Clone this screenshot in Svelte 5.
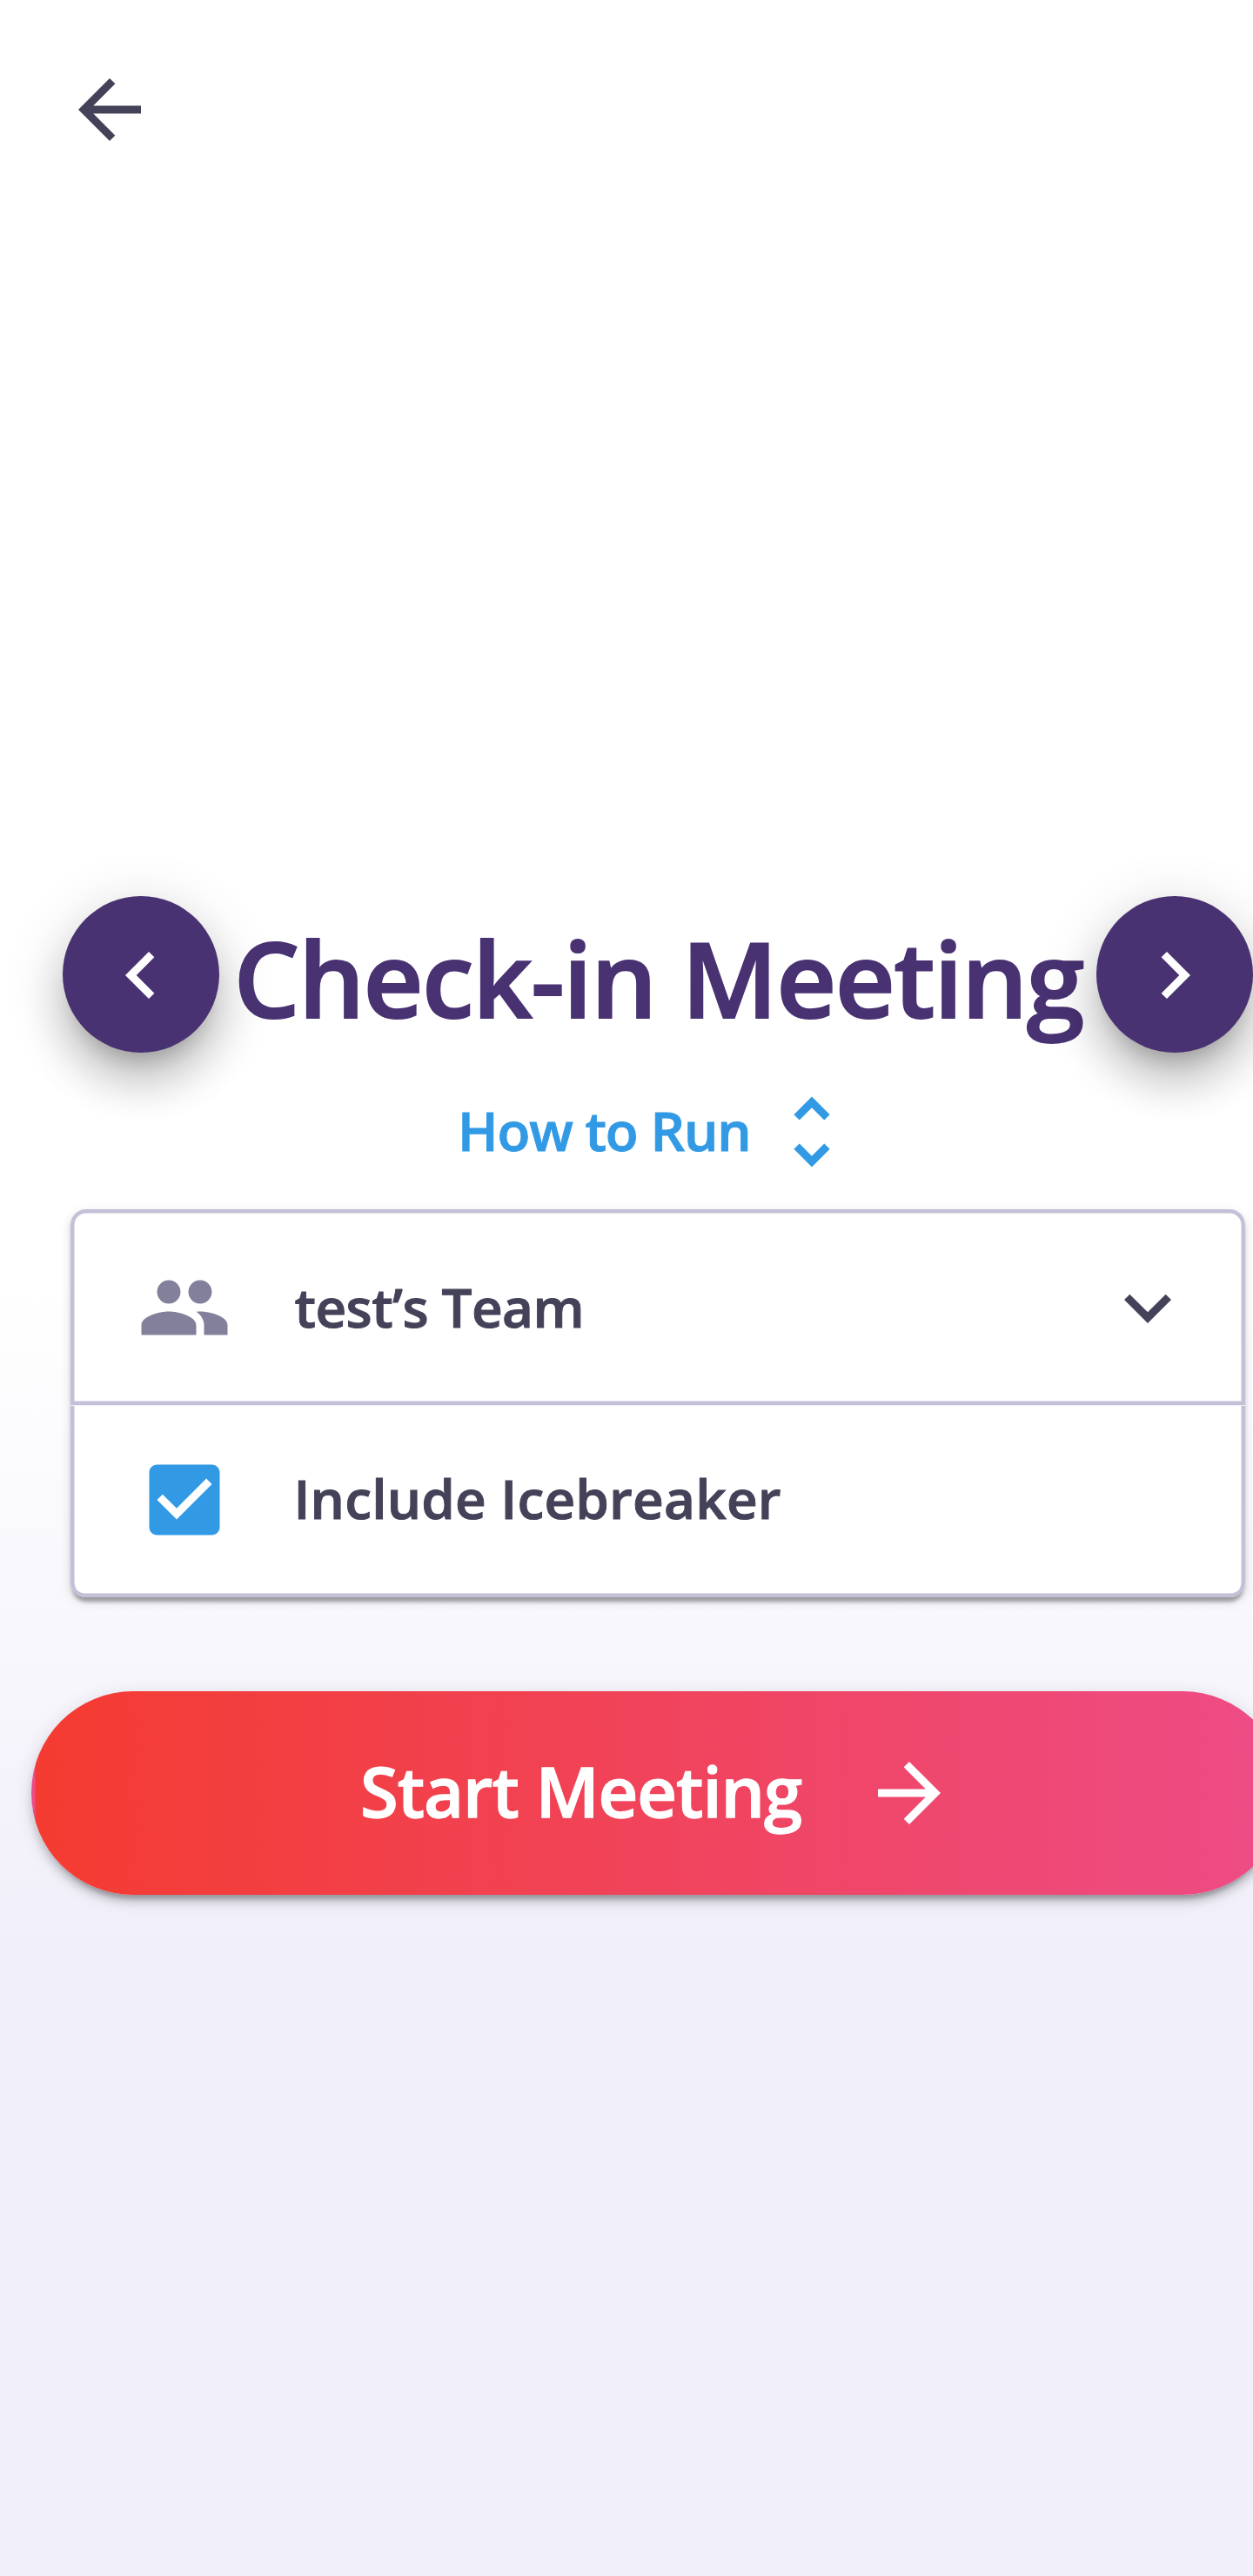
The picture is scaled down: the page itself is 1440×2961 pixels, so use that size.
<script>
  let includeIcebreaker = $state(true);
</script>

<main class="page">
  <header>
    <button class="plain" aria-label="Back">
      <svg class="icon" viewBox="0 0 24 24"><path d="M20 11H7.83l5.59-5.59L12 4l-8 8 8 8 1.41-1.41L7.83 13H20v-2z" /></svg>
    </button>
  </header>

  <section class="picker">
    <button class="round" aria-label="Previous">
      <svg class="icon" viewBox="0 0 24 24"><path d="M15.41 7.41L14 6l-6 6 6 6 1.41-1.41L10.83 12z" /></svg>
    </button>
    <h1>Check-in Meeting</h1>
    <button class="round" aria-label="Next">
      <svg class="icon" viewBox="0 0 24 24"><path d="M10 6L8.59 7.41 13.17 12l-4.58 4.59L10 18l6-6z" /></svg>
    </button>
  </section>

  <button class="plain how">
    <span>How to Run</span>
    <svg class="icon" viewBox="0 0 24 24"><path d="M12 5.83L15.17 9l1.41-1.41L12 3 7.41 7.59 8.83 9 12 5.83zm0 12.34L8.83 15l-1.41 1.41L12 21l4.59-4.59L15.17 15 12 18.17z" /></svg>
  </button>

  <section class="card">
    <button class="plain row team">
      <svg class="icon muted" viewBox="0 0 24 24"><path d="M16 11c1.66 0 2.99-1.34 2.99-3S17.66 5 16 5c-1.66 0-3 1.34-3 3s1.34 3 3 3zm-8 0c1.66 0 2.99-1.34 2.99-3S9.66 5 8 5C6.34 5 5 6.34 5 8s1.34 3 3 3zm0 2c-2.33 0-7 1.17-7 3.5V19h14v-2.5c0-2.33-4.67-3.5-7-3.5zm8 0c-.29 0-.62.02-.97.05 1.16.84 1.97 1.97 1.97 3.45V19h6v-2.5c0-2.33-4.67-3.5-7-3.5z" /></svg>
      <span class="label name">test’s Team</span>
      <svg class="icon" viewBox="0 0 24 24"><path d="M16.59 8.59L12 13.17 7.41 8.59 6 10l6 6 6-6z" /></svg>
    </button>
    <button class="plain row ice" onclick={() => (includeIcebreaker = !includeIcebreaker)}>
      <svg class="icon blue" viewBox="0 0 24 24">
        {#if includeIcebreaker}
          <path d="M19 3H5c-1.11 0-2 .9-2 2v14c0 1.1.89 2 2 2h14c1.11 0 2-.9 2-2V5c0-1.1-.89-2-2-2zm-9 14l-5-5 1.41-1.41L10 14.17l7.59-7.59L19 8l-9 9z" />
        {:else}
          <path d="M19 5v14H5V5h14m0-2H5c-1.1 0-2 .9-2 2v14c0 1.1.9 2 2 2h14c1.1 0 2-.9 2-2V5c0-1.1-.9-2-2-2z" />
        {/if}
      </svg>
      <span class="label option">Include Icebreaker</span>
    </button>
  </section>

  <button class="start">
    <span>Start Meeting</span>
    <svg class="icon" viewBox="0 0 24 24"><path d="M12 4l-1.41 1.41L16.17 11H4v2h12.17l-5.58 5.59L12 20l8-8z" /></svg>
  </button>
</main>

<style>
  :global(body) {
    margin: 0;
    overflow: hidden;
  }

  .page {
    box-sizing: border-box;
    width: 1440px;
    height: 2961px;
    overflow: hidden;
    display: flex;
    flex-direction: column;
    background: linear-gradient(0deg, #f1f0fa 25%, #fff 50%);
    color: #444258;
    font-family: "Open Sans", "Noto Sans", sans-serif;
    font-weight: 600;
  }

  button {
    font: inherit;
    color: inherit;
    border: 0;
    padding: 0;
    box-sizing: border-box;
    white-space: nowrap;
  }

  h1,
  span {
    -webkit-text-stroke: 0.016em currentColor;
  }

  .plain {
    background: none;
  }

  .icon {
    display: block;
    flex: none;
    width: 108px;
    height: 108px;
    fill: currentColor;
  }

  header {
    box-sizing: border-box;
    height: 1030px;
    padding: 72px;
    flex: none;
  }

  .picker {
    display: flex;
    align-items: center;
    justify-content: space-between;
    height: 180px;
    padding-left: 72px;
    flex: none;
  }

  .round {
    display: flex;
    align-items: center;
    justify-content: center;
    flex: none;
    width: 180px;
    height: 180px;
    border-radius: 50%;
    background: #493272;
    color: #fff;
    box-shadow:
      0 22.5px 22.5px -13.5px rgba(0, 0, 0, 0.2),
      0 36px 45px 4.5px rgba(0, 0, 0, 0.14),
      0 13.5px 63px 9px rgba(0, 0, 0, 0.12);
  }

  .round .icon {
    margin-top: 1px;
  }

  h1 {
    margin: 0;
    padding: 7px 0 0 1px;
    color: #493272;
    font-size: 120px;
    line-height: 160px;
    font-weight: 600;
    letter-spacing: -1.6px;
    white-space: nowrap;
  }

  .how {
    display: flex;
    align-items: center;
    align-self: flex-start;
    height: 108px;
    margin: 37px 0 0 525px;
    color: #329ae5;
    font-size: 62px;
    line-height: 80px;
    letter-spacing: -1.15px;
  }

  .how span {
    width: 353px;
    padding: 0 0 4px 1px;
    text-align: left;
  }

  .card {
    width: 1350px;
    margin: 35px 0 0 81px;
    flex: none;
    border-radius: 18px;
    font-size: 62px;
    line-height: 80px;
    box-shadow:
      0 9px 4.5px -4.5px rgba(0, 0, 0, 0.2),
      0 4.5px 4.5px 0 rgba(0, 0, 0, 0.14),
      0 4.5px 13.5px 0 rgba(0, 0, 0, 0.12);
  }

  .row {
    display: flex;
    align-items: center;
    width: 100%;
    padding: 0 58.5px 0 76.5px;
    background: #fff;
    text-align: left;
  }

  .team {
    height: 225px;
    border-radius: 18px 18px 0 0;
    box-shadow: inset 0 0 0 4.5px #c3c0d8;
  }

  .ice {
    height: 221px;
    padding-bottom: 4px;
    border-radius: 0 0 18px 18px;
    box-shadow:
      inset 0 1px 0 #f0eff5,
      inset 4.5px 0 0 #c3c0d8,
      inset -4.5px 0 0 #c3c0d8,
      inset 0 -4.5px 0 #c3c0d8;
  }

  .label {
    flex: 1;
    padding: 0 0 3px 73px;
  }

  .name {
    padding-bottom: 2px;
    letter-spacing: -0.6px;
  }

  .option {
    padding-left: 72px;
    letter-spacing: 0.2px;
  }

  .muted {
    color: #82809a;
  }

  .blue {
    color: #329ae5;
  }

  .start {
    display: flex;
    align-items: center;
    flex: none;
    width: 1440px;
    height: 234px;
    margin: 108px 0 0 36px;
    padding-left: 378px;
    border-radius: 117px;
    background: linear-gradient(to right, #f43b31, #ed4c86) 4.5px 0 / 1431px 100% repeat-x;
    color: #fff;
    font-size: 79.5px;
    line-height: 108px;
    letter-spacing: -1.05px;
    text-align: left;
    box-shadow:
      0 13.5px 4.5px -9px rgba(0, 0, 0, 0.2),
      0 9px 9px 0 rgba(0, 0, 0, 0.14),
      0 4.5px 22.5px 0 rgba(0, 0, 0, 0.12);
  }

  .start span {
    width: 577px;
    padding-bottom: 7px;
  }
</style>
